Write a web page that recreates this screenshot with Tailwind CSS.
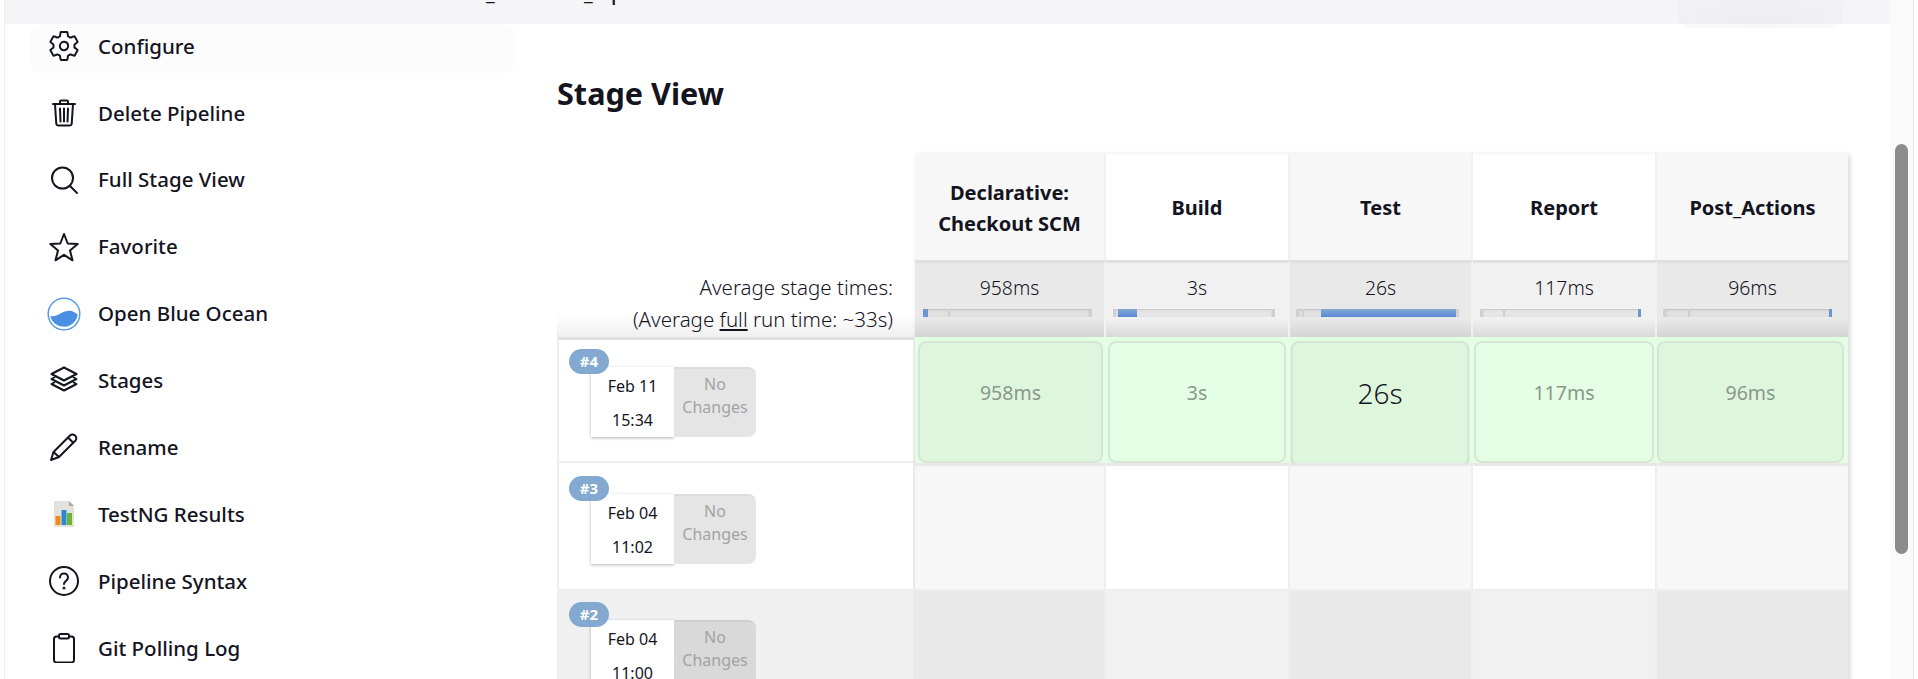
<!DOCTYPE html>
<html lang="en">
<head>
    <meta charset="UTF-8">
    <meta name="viewport" content="width=device-width, initial-scale=1.0">
    <title>Pipeline - Stage View</title>
    <script src="https://cdn.jsdelivr.net/npm/@tailwindcss/browser@4"></script>
</head>
<body class="bg-white h-[679px] overflow-hidden font-['Noto_Sans',sans-serif] text-[#14141f]">
    <div class="flex h-[679px]">
        <div class="w-[4px] bg-white"></div>
        <div class="w-[1886px] border-l border-[#eeeeee]">
            <!-- top band, the page title is scrolled away above it -->
            <div class="relative h-[24px] bg-[#f5f5f7]">
                <div class="absolute inset-0 overflow-hidden text-[20px] leading-[20px] font-medium">
                    <span class="absolute left-[481px] top-[-17px]">_</span>
                    <span class="absolute left-[579px] top-[-17px]">_</span>
                    <span class="absolute left-[606px] top-[-17px]">p</span>
                </div>
                <div class="absolute left-[1673px] top-0 w-[165px] h-[28px] rounded-b-xl bg-[radial-gradient(ellipse_at_50%_100%,rgba(20,20,31,0.035),rgba(20,20,31,0.012))]"></div>
            </div>
            <div class="flex">
                <!-- side panel -->
                <aside class="w-[552px] shrink-0">
                    <ul class="pl-[25px] w-[510px] text-[20.5px] font-medium">
                        <li class="flex items-center gap-[19px] h-[49px] pb-[5px] pl-[19px] mb-[17.9px] bg-[#fcfcfd] rounded-xl">
                            <svg class="w-[30px] h-[30px]" viewBox="26 26 460 460" fill="none" stroke="currentColor" stroke-width="30" stroke-linejoin="round"><path d="M262.29 192.31a64 64 0 1057.4 57.4 64.13 64.13 0 00-57.4-57.4zM416.39 256a154.34 154.34 0 01-1.53 20.79l45.21 35.46a10.81 10.81 0 012.45 13.75l-42.77 74a10.81 10.81 0 01-13.14 4.59l-44.9-18.08a16.11 16.11 0 00-15.17 1.75A164.48 164.48 0 01325 400.8a15.94 15.94 0 00-8.82 12.14l-6.73 47.89a11.08 11.08 0 01-10.68 9.17h-85.54a11.11 11.11 0 01-10.69-8.87l-6.72-47.82a16.07 16.07 0 00-9-12.22 155.3 155.3 0 01-21.46-12.57 16 16 0 00-15.11-1.71l-44.89 18.07a10.81 10.81 0 01-13.14-4.58l-42.77-74a10.8 10.8 0 012.45-13.75l38.21-30a16.05 16.05 0 006-14.08c-.36-4.17-.58-8.33-.58-12.5s.21-8.27.58-12.35a16 16 0 00-6.07-13.94l-38.19-30A10.81 10.81 0 0149.48 186l42.77-74a10.81 10.81 0 0113.14-4.59l44.9 18.08a16.11 16.11 0 0015.17-1.75A164.48 164.48 0 01187 111.2a15.94 15.94 0 008.82-12.14l6.73-47.89A11.08 11.08 0 01213.23 42h85.54a11.11 11.11 0 0110.69 8.87l6.72 47.82a16.07 16.07 0 009 12.22 155.3 155.3 0 0121.46 12.57 16 16 0 0015.11 1.71l44.89-18.07a10.81 10.81 0 0113.14 4.58l42.77 74a10.8 10.8 0 01-2.45 13.75l-38.21 30a16.05 16.05 0 00-6.05 14.08c.33 4.14.55 8.3.55 12.47z"/></svg>
                            <span>Configure</span>
                        </li>
                        <li class="flex items-center gap-[19px] h-[49px] pb-[5px] pl-[19px] mb-[17.9px]">
                            <svg class="w-[30px] h-[30px]" viewBox="0 0 30 30" fill="none" stroke="currentColor" stroke-width="2" stroke-linecap="round" stroke-linejoin="round"><path d="M4 6h22M11 6V3.500a1 1 0 0 1 1-1h6a1 1 0 0 1 1 1V6M6 6l1.300 20a1.800 1.800 0 0 0 1.800 1.600h11.800a1.800 1.800 0 0 0 1.800-1.600L24 6M11 10.500l.5 13M15 10.500v13M19 10.500l-.5 13"/></svg>
                            <span>Delete Pipeline</span>
                        </li>
                        <li class="flex items-center gap-[19px] h-[49px] pb-[5px] pl-[19px] mb-[17.9px]">
                            <svg class="w-[30px] h-[30px]" viewBox="0 0 30 30" fill="none" stroke="currentColor" stroke-width="2" stroke-linecap="round"><circle cx="13.500" cy="13" r="10.500"/><path d="M21 21l7 7"/></svg>
                            <span>Full Stage View</span>
                        </li>
                        <li class="flex items-center gap-[19px] h-[49px] pb-[5px] pl-[19px] mb-[17.9px]">
                            <svg class="w-[30px] h-[30px]" viewBox="0 0 30 30" fill="none" stroke="currentColor" stroke-width="2" stroke-linejoin="round"><path d="M15 2l3.700 9.500 10 .6-7.700 6.400 2.500 9.800-8.500-5.500-8.500 5.500 2.500-9.800-7.700-6.400 10-.6z"/></svg>
                            <span>Favorite</span>
                        </li>
                        <li class="flex items-center gap-[17px] h-[49px] pb-[5px] pl-[17px] mb-[17.9px]">
                            <svg class="w-[34px] h-[34px]" viewBox="0 0 34 34"><circle cx="17" cy="17" r="15.800" fill="none" stroke="#5a9be8" stroke-width="1.500"/><path d="M3.200 19c3 .5 5.500 0 8.500-1.500s6-4 11-3.800c3 .1 5.500 1.800 8 3.800A14 14 0 0 1 3.200 19z" fill="#4a90e2"/></svg>
                            <span>Open Blue Ocean</span>
                        </li>
                        <li class="flex items-center gap-[19px] h-[49px] pb-[5px] pl-[19px] mb-[17.9px]">
                            <svg class="w-[30px] h-[30px]" viewBox="0 0 30 30" fill="none" stroke="currentColor" stroke-width="2" stroke-linejoin="round"><path d="M15 2.500L27.500 9 15 15.500 2.500 9zM6 12l-3.500 2L15 20.500 27.500 14 24 12M6 17l-3.500 2L15 25.500 27.500 19 24 17"/></svg>
                            <span>Stages</span>
                        </li>
                        <li class="flex items-center gap-[19px] h-[49px] pb-[5px] pl-[19px] mb-[17.9px]">
                            <svg class="w-[30px] h-[30px]" viewBox="0 0 30 30" fill="none" stroke="currentColor" stroke-width="2" stroke-linejoin="round"><path d="M2 28l2.500-8L21 3.500a3.500 3.500 0 0 1 5 0 3.500 3.500 0 0 1 .5 5L10 25zM4.500 20L10 25M19 5.500l5.500 5.500"/></svg>
                            <span>Rename</span>
                        </li>
                        <li class="flex items-center gap-[19px] h-[49px] pb-[5px] pl-[19px] mb-[17.9px]">
                            <svg class="w-[30px] h-[30px]" viewBox="0 0 30 30"><path d="M5 2h15l5 5v21H5z" fill="#e2e2dc"/><path d="M20 2l5 5h-5z" fill="#a8a8a8"/><rect x="6.500" y="17" width="5" height="9" fill="#f08c12"/><rect x="12.500" y="11" width="5" height="15" fill="#2a86d8"/><rect x="18" y="14" width="5" height="12" fill="#6ab62e"/></svg>
                            <span>TestNG Results</span>
                        </li>
                        <li class="flex items-center gap-[19px] h-[49px] pb-[5px] pl-[19px] mb-[17.9px]">
                            <svg class="w-[30px] h-[30px]" viewBox="0 0 30 30" fill="none" stroke="currentColor" stroke-width="2" stroke-linecap="round"><circle cx="15" cy="15" r="14"/><path d="M11 11.500c0-2.500 2-4 4-4s4 1.500 4 4c0 3.500-4 3.500-4 6.500"/><circle cx="15" cy="22" r=".6"/></svg>
                            <span>Pipeline Syntax</span>
                        </li>
                        <li class="flex items-center gap-[19px] h-[49px] pb-[5px] pl-[19px]">
                            <svg class="w-[30px] h-[30px]" viewBox="0 0 30 30" fill="none" stroke="currentColor" stroke-width="2" stroke-linejoin="round"><rect x="5" y="3.500" width="20" height="26" rx="2.500"/><rect x="10" y="1" width="10" height="4.500" rx="1.500" fill="#fff"/></svg>
                            <span>Git Polling Log</span>
                        </li>
                    </ul>
                </aside>

                <!-- main panel -->
                <main class="flex-1">
                    <h2 class="h-[130px] pt-[46px] text-[30.6px] leading-[46px] font-bold">Stage View</h2>
                    <div class="relative grid grid-cols-[358px_191px_184px_183px_184px_191px] w-[1291px]">
                        <div class="absolute left-[358px] top-0 right-0 bottom-0 pointer-events-none shadow-[2px_1px_5px_rgba(0,0,0,0.16)] z-10"></div>

                        <!-- header row -->
                        <div class="h-[106px]"></div>
                        <div class="flex items-center justify-center text-center h-[106px] pt-[2px] bg-[#f7f7f7] text-[20px] leading-[31px] font-bold border-r-2 border-[#f1f1f1]">Declarative:<br>Checkout SCM</div>
                        <div class="flex items-center justify-center h-[106px] pt-[2px] bg-white text-[20px] font-bold border-r-2 border-[#f1f1f1]">Build</div>
                        <div class="flex items-center justify-center h-[106px] pt-[2px] bg-[#f7f7f7] text-[20px] font-bold border-r-2 border-[#f1f1f1]">Test</div>
                        <div class="flex items-center justify-center h-[106px] pt-[2px] bg-white text-[20px] font-bold border-r-2 border-[#f1f1f1]">Report</div>
                        <div class="flex items-center justify-center h-[106px] pt-[2px] bg-[#f7f7f7] text-[20px] font-bold">Post_Actions</div>

                        <!-- averages row -->
                        <div class="h-[77px] pt-[11px] pr-[22px] text-right text-[20.5px] leading-[32px] font-light bg-gradient-to-b from-white from-70% to-[#f0f0f0]">Average stage times:<br>(Average <span class="underline">full</span> run time: ~33s)</div>
                        <div class="h-[77px] pt-[11px] text-center text-[19.4px] leading-[28px] font-light bg-gradient-to-b from-[#e9e9e9] from-75% to-[#d4d4d4] border-t-[3px] border-t-[#e0e0e0] border-r-2 border-r-[#f1f1f1]">958ms
                            <div class="relative h-[8px] mt-[7px] ml-[8px] w-[169px] bg-[#e0e0e0] border-x-[3px] border-x-[#d0d0d0] shadow-[inset_0_1px_2px_rgba(0,0,0,0.15)]">
                                <div class="absolute left-[22px] top-0 h-[8px] w-[2px] bg-[#cfcfcf]"></div>
                                <div class="absolute left-[-3px] top-0 h-[8px] w-[5px] bg-[#6f94d2]"></div>
                            </div>
                        </div>
                        <div class="h-[77px] pt-[11px] text-center text-[19.4px] leading-[28px] font-light bg-gradient-to-b from-[#f1f1f1] from-75% to-[#d9d9d9] border-t-[3px] border-t-[#e0e0e0] border-r-2 border-r-[#f1f1f1]">3s
                            <div class="relative h-[8px] mt-[7px] ml-[7px] w-[162px] bg-[#e6e6e6] border-x-[3px] border-x-[#d0d0d0] shadow-[inset_0_1px_2px_rgba(0,0,0,0.15)]">
                                <div class="absolute left-[2px] top-0 h-[8px] w-[19px] bg-gradient-to-b from-[#84a9d0] to-[#5b86d6]"></div>
                            </div>
                        </div>
                        <div class="h-[77px] pt-[11px] text-center text-[19.4px] leading-[28px] font-light bg-gradient-to-b from-[#e9e9e9] from-75% to-[#d4d4d4] border-t-[3px] border-t-[#e0e0e0] border-r-2 border-r-[#f1f1f1]">26s
                            <div class="relative h-[8px] mt-[7px] ml-[6px] w-[163px] bg-[#e0e0e0] border-x-[3px] border-x-[#d0d0d0] shadow-[inset_0_1px_2px_rgba(0,0,0,0.15)]">
                                <div class="absolute left-[3px] top-0 h-[8px] w-[2px] bg-[#cfcfcf]"></div>
                                <div class="absolute left-[22px] top-0 h-[8px] w-[135px] bg-gradient-to-b from-[#84a9d0] to-[#5b86d6]"></div>
                            </div>
                        </div>
                        <div class="h-[77px] pt-[11px] text-center text-[19.4px] leading-[28px] font-light bg-gradient-to-b from-[#f1f1f1] from-75% to-[#d9d9d9] border-t-[3px] border-t-[#e0e0e0] border-r-2 border-r-[#f1f1f1]">117ms
                            <div class="relative h-[8px] mt-[7px] ml-[7px] w-[161px] bg-[#e6e6e6] border-l-[3px] border-l-[#d0d0d0] shadow-[inset_0_1px_2px_rgba(0,0,0,0.15)]">
                                <div class="absolute left-[20px] top-0 h-[8px] w-[2px] bg-[#cfcfcf]"></div>
                                <div class="absolute right-0 top-0 h-[8px] w-[3px] bg-[#6f94d2]"></div>
                            </div>
                        </div>
                        <div class="h-[77px] pt-[11px] text-center text-[19.4px] leading-[28px] font-light bg-gradient-to-b from-[#e9e9e9] from-75% to-[#d4d4d4] border-t-[3px] border-t-[#e0e0e0]">96ms
                            <div class="relative h-[8px] mt-[7px] ml-[6px] w-[169px] bg-[#e0e0e0] border-l-[3px] border-l-[#d0d0d0] shadow-[inset_0_1px_2px_rgba(0,0,0,0.15)]">
                                <div class="absolute left-[22px] top-0 h-[8px] w-[2px] bg-[#cfcfcf]"></div>
                                <div class="absolute right-0 top-0 h-[8px] w-[3px] bg-[#6f94d2]"></div>
                            </div>
                        </div>

                        <!-- build #4 -->
                        <div class="relative h-[126px] bg-white border-t-[3px] border-t-[#e0e0e0] border-b-2 border-b-[#eeeeee] border-x-2 border-x-[#eeeeee]">
                            <span class="absolute left-[10px] top-[9px] w-[40px] h-[25px] rounded-full bg-[#84a9d0] text-white text-[15px] leading-[25px] font-bold text-center z-10">#4</span>
                            <div class="flex pl-[32px] pt-[27px]">
                                <div class="w-[83px] h-[70px] pt-[2px] bg-white shadow-[0_1px_3px_rgba(0,0,0,0.3)] text-center text-[16px] leading-[34px]">Feb 11<br>15:34</div>
                                <div class="w-[82px] h-[70px] bg-[#e5e5e5] border-t-2 border-t-[#dcdcdc] rounded-r-lg text-center text-[16px] leading-[23px] text-[#a3a3a3] pt-[4px]">No<br>Changes</div>
                            </div>
                        </div>
                        <div class="h-[126px] pt-[4px] pl-[3px] pr-[3px] bg-[#e3ffe3]"><div class="flex items-center justify-center h-[122px] pb-[18px] rounded-lg border-2 border-[#d8e4d8] bg-[#def7dc] text-[19.5px] text-[#8a978a]">958ms</div></div>
                        <div class="h-[126px] pt-[4px] pl-[2px] pr-[4px] bg-[#e3ffe3]"><div class="flex items-center justify-center h-[122px] pb-[18px] rounded-lg border-2 border-[#d8e4d8] bg-[#e4ffe4] text-[19.5px] text-[#8a978a]">3s</div></div>
                        <div class="h-[126px] pt-[4px] pl-[1px] pr-[4px] bg-[#e3ffe3]"><div class="flex items-center justify-center h-[125px] pb-[21px] rounded-lg border-2 border-[#d8e4d8] bg-[#def7dc] text-[28px] font-light shadow-[0_1px_2px_rgba(0,0,0,0.15)]">26s</div></div>
                        <div class="h-[126px] pt-[4px] pl-[1px] pr-[3px] bg-[#e3ffe3]"><div class="flex items-center justify-center h-[122px] pb-[18px] rounded-lg border-2 border-[#d8e4d8] bg-[#e4ffe4] text-[19.5px] text-[#8a978a]">117ms</div></div>
                        <div class="h-[126px] pt-[4px] pr-[4px] bg-[#e3ffe3]"><div class="flex items-center justify-center h-[122px] pb-[18px] rounded-lg border-2 border-[#d8e4d8] bg-[#def7dc] text-[19.5px] text-[#8a978a]">96ms</div></div>

                        <!-- build #3 -->
                        <div class="relative h-[128px] bg-white border-b-2 border-b-[#eeeeee] border-x-2 border-x-[#eeeeee]">
                            <span class="absolute left-[10px] top-[13px] w-[40px] h-[25px] rounded-full bg-[#84a9d0] text-white text-[15px] leading-[25px] font-bold text-center z-10">#3</span>
                            <div class="flex pl-[32px] pt-[31px]">
                                <div class="w-[83px] h-[70px] pt-[2px] bg-white shadow-[0_1px_3px_rgba(0,0,0,0.3)] text-center text-[16px] leading-[34px]">Feb 04<br>11:02</div>
                                <div class="w-[82px] h-[70px] bg-[#e5e5e5] border-t-2 border-t-[#dcdcdc] rounded-r-lg text-center text-[16px] leading-[23px] text-[#a3a3a3] pt-[4px]">No<br>Changes</div>
                            </div>
                        </div>
                        <div class="bg-[#f7f7f7] border-t-[3px] border-t-[#e8e8e8] border-b-2 border-b-[#eeeeee] border-r-2 border-r-[#eeeeee]"></div>
                        <div class="bg-white border-t-[3px] border-t-[#e8e8e8] border-b-2 border-b-[#eeeeee] border-r-2 border-r-[#eeeeee]"></div>
                        <div class="bg-[#f7f7f7] border-t-[3px] border-t-[#e8e8e8] border-b-2 border-b-[#eeeeee] border-r-2 border-r-[#eeeeee]"></div>
                        <div class="bg-white border-t-[3px] border-t-[#e8e8e8] border-b-2 border-b-[#eeeeee] border-r-2 border-r-[#eeeeee]"></div>
                        <div class="bg-[#f7f7f7] border-t-[3px] border-t-[#e8e8e8] border-b-2 border-b-[#eeeeee]"></div>

                        <!-- build #2 -->
                        <div class="relative h-[126px] bg-[#f0f0f0] border-x-2 border-x-[#eeeeee]">
                            <span class="absolute left-[10px] top-[11px] w-[40px] h-[25px] rounded-full bg-[#84a9d0] text-white text-[15px] leading-[25px] font-bold text-center z-10">#2</span>
                            <div class="flex pl-[32px] pt-[29px]">
                                <div class="w-[83px] h-[70px] pt-[2px] bg-white shadow-[0_1px_3px_rgba(0,0,0,0.3)] text-center text-[16px] leading-[34px]">Feb 04<br>11:00</div>
                                <div class="w-[82px] h-[70px] bg-[#d9d9d9] border-t-2 border-t-[#cfcfcf] rounded-r-lg text-center text-[16px] leading-[23px] text-[#a3a3a3] pt-[4px]">No<br>Changes</div>
                            </div>
                        </div>
                        <div class="bg-[#e9e9e9] border-r-2 border-r-[#eeeeee]"></div>
                        <div class="bg-[#f1f1f1] border-r-2 border-r-[#eeeeee]"></div>
                        <div class="bg-[#e9e9e9] border-r-2 border-r-[#eeeeee]"></div>
                        <div class="bg-[#f1f1f1] border-r-2 border-r-[#eeeeee]"></div>
                        <div class="bg-[#e9e9e9]"></div>
                    </div>
                </main>
            </div>
        </div>
        <!-- scrollbar -->
        <div class="w-[24px] bg-[#fafafa] border-r border-[#e6e6e6] pl-[5px] pt-[144px]">
            <div class="w-[13px] h-[410px] rounded-full bg-[#8c8c8c]"></div>
        </div>
        <div class="flex-1 bg-white"></div>
    </div>
</body>
</html>
